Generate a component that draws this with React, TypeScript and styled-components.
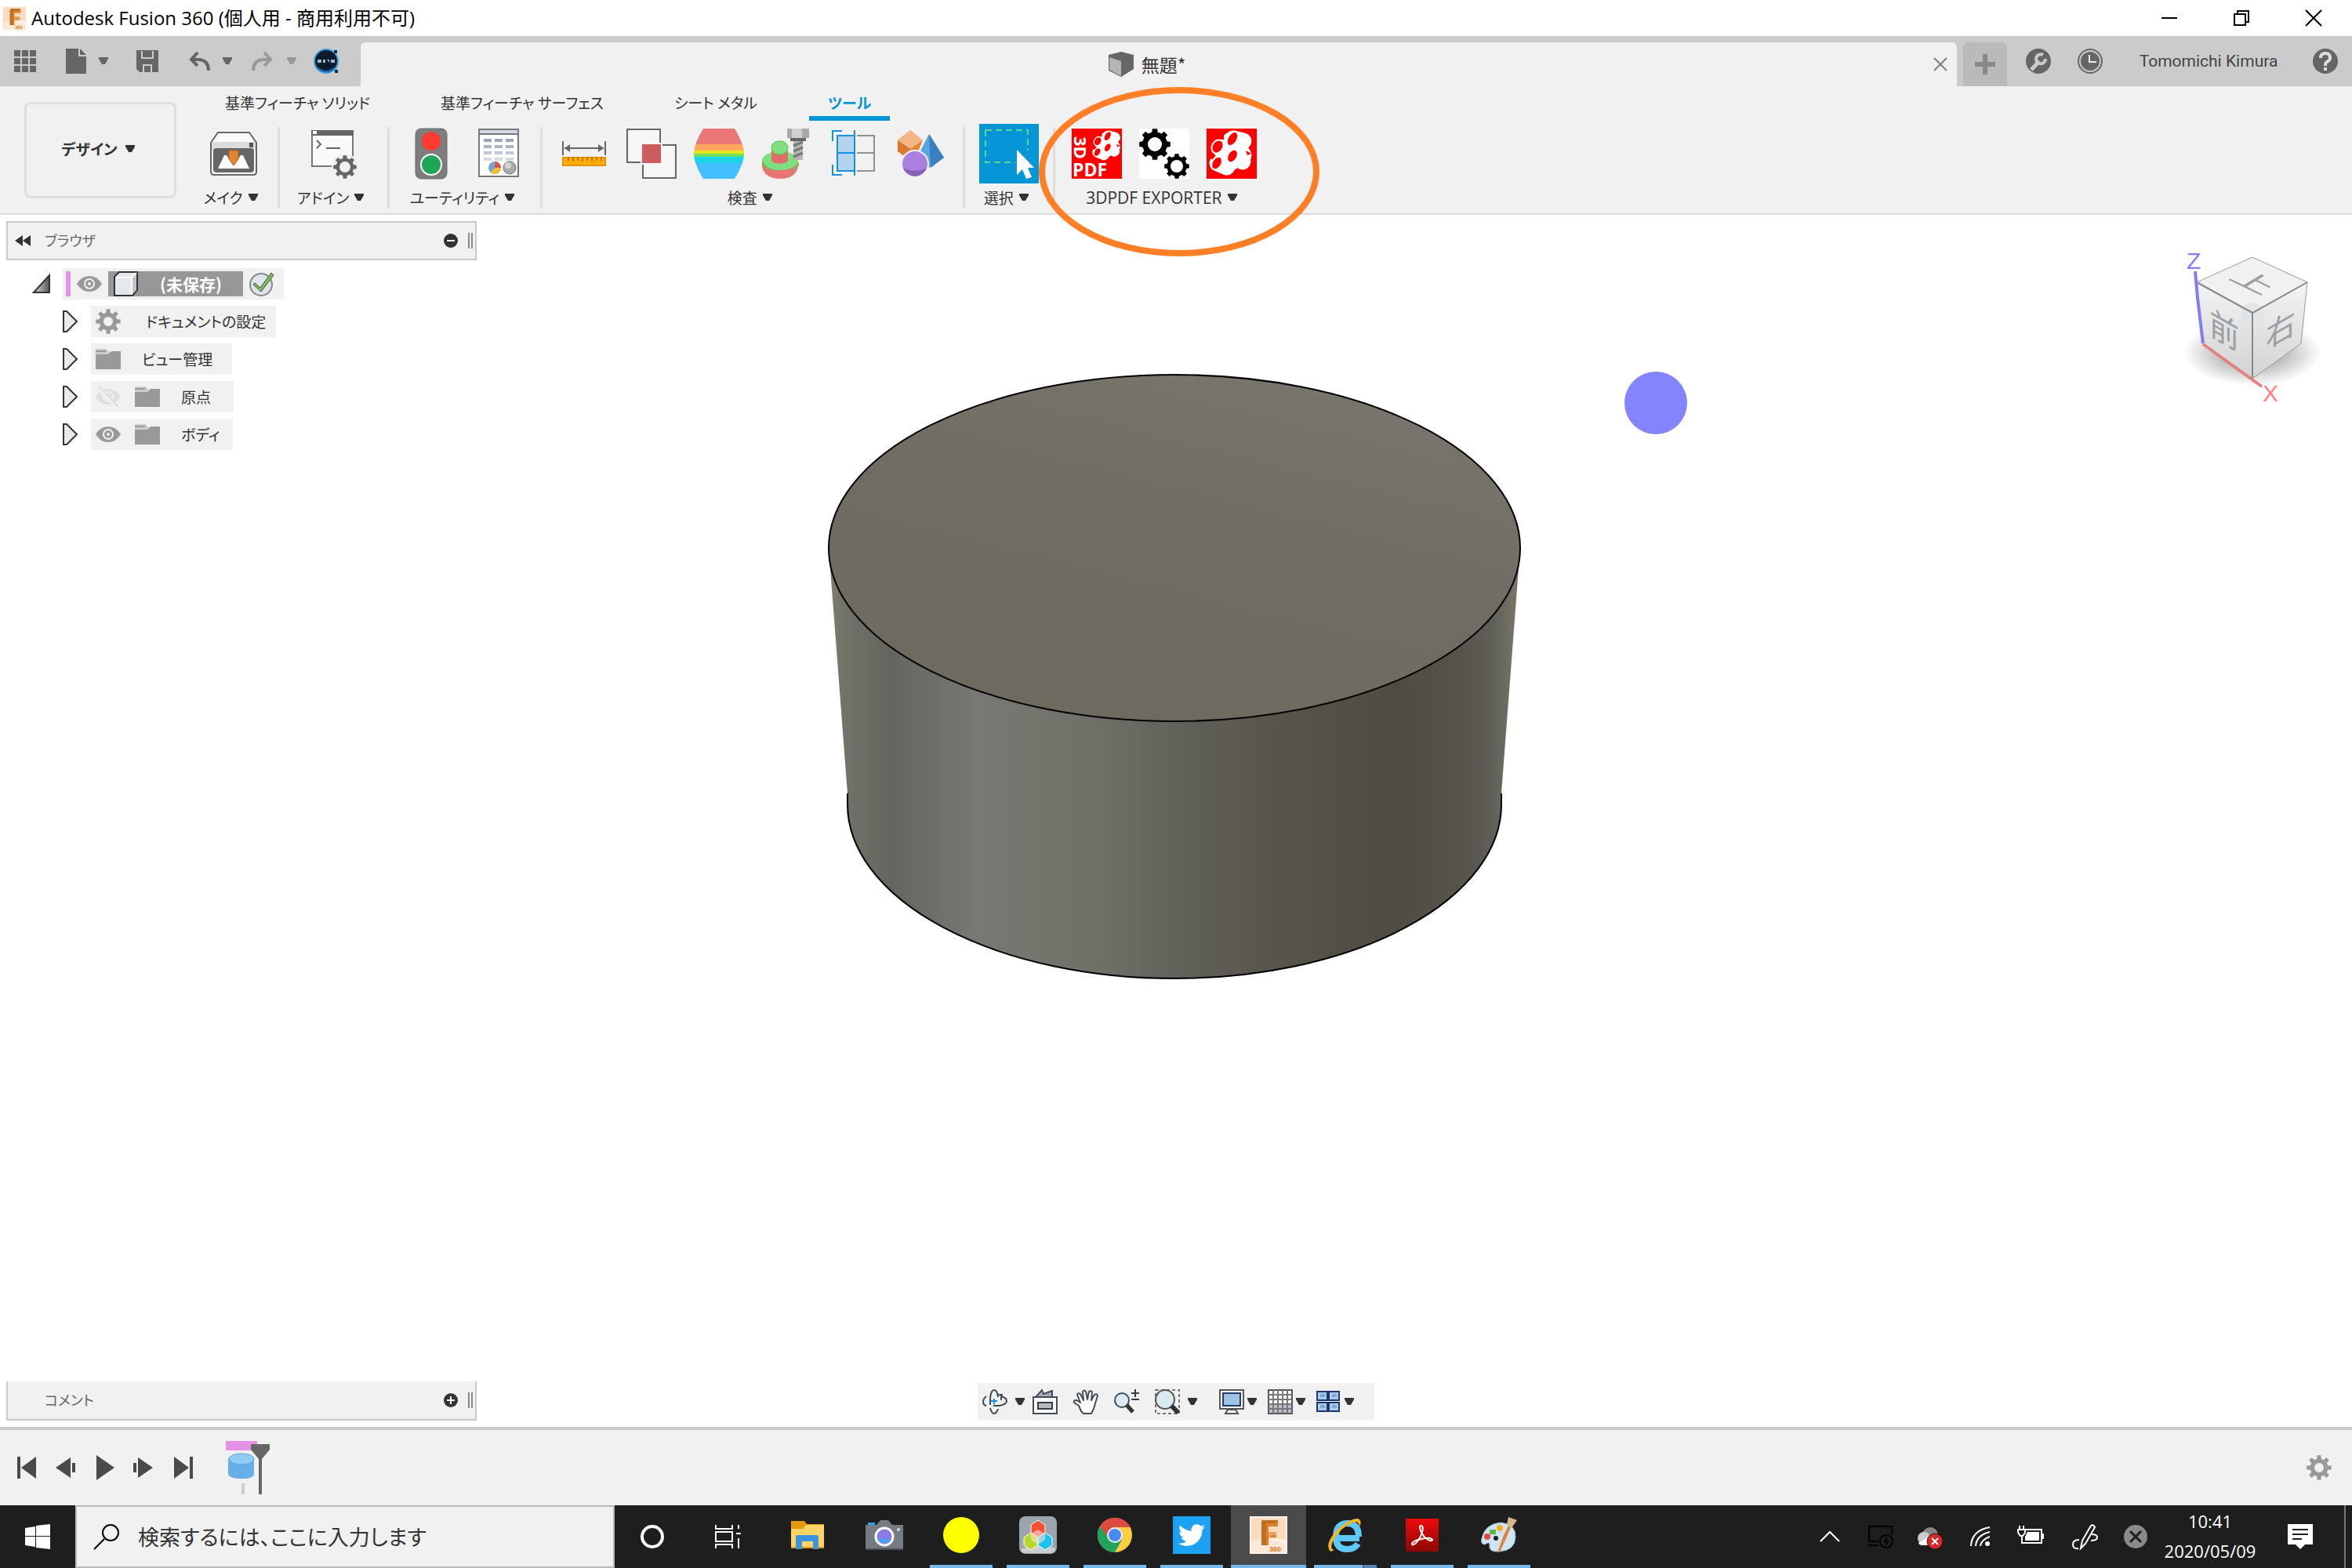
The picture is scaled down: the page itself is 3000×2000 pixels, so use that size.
import React from 'react';
import styled, { createGlobalStyle, css } from 'styled-components';
import { FaTwitter } from 'react-icons/fa';

const jp = `"Noto Sans CJK JP", sans-serif`;
const ui = `"Open Sans", "Noto Sans CJK JP", sans-serif`;

const Global = createGlobalStyle`
  * { box-sizing: border-box; }
  body { margin: 0; background: #fff; }
  button, input { font: inherit; color: inherit; border: 0; background: none; padding: 0; margin: 0; }
  svg { display: block; flex: none; overflow: visible; }
`;

const Page = styled.div`
  min-height: 100vh;
  display: flex;
  flex-direction: column;
  overflow: hidden;
  font-family: ${jp};
  font-size: 19px;
  line-height: 24px;
  color: #333;
  white-space: nowrap;
`;

const IconButton = styled.button<{ $w?: number }>`
  display: flex;
  align-items: center;
  justify-content: center;
  flex: none;
  ${p => p.$w && css`width: ${p.$w}px;`}
`;

/* ---------- window title ---------- */
const TitleBar = styled.header`
  display: flex;
  align-items: center;
  height: 46px;
  padding: 0 3px;
  gap: 6px;
`;
const Title = styled.h1`
  flex: 1;
  margin: 0;
  font: 400 24px/32px ${ui};
  color: #000;
`;
const WindowButtons = styled.div`
  display: flex;
  align-self: stretch;
`;

/* ---------- document tab bar ---------- */
const TabBar = styled.div`
  display: flex;
  height: 64px;
  background: #cbcbcb;
  color: #666;
`;
const QuickAccess = styled.div`
  display: flex;
  align-items: center;
  gap: 34px;
  width: 460px;
  padding-left: 16px;
`;
const Pair = styled.div<{ $gap: number }>`
  display: flex;
  align-items: center;
  gap: ${p => p.$gap}px;
`;
const DocTab = styled.div`
  flex: 1;
  display: flex;
  margin-top: 8px;
  border-radius: 6px 6px 0 0;
  background: #f1f1f1;
`;
const DocName = styled.div`
  flex: 1;
  display: flex;
  align-items: center;
  justify-content: center;
  gap: 10px;
  font-size: 23px;
  color: #333;
`;
const AddTab = styled.button`
  display: flex;
  align-items: center;
  justify-content: center;
  width: 56px;
  margin: 8px 8px 0;
  border-radius: 6px 6px 0 0;
  background: #bababa;
`;
const Account = styled.div`
  display: flex;
  align-items: center;
  padding-right: 2px;
`;
const UserName = styled.button`
  width: 234px;
  font: 400 21px/28px Roboto, sans-serif;
  color: #444;
`;

/* ---------- ribbon ---------- */
const Ribbon = styled.div`
  display: flex;
  gap: 17px;
  height: 164px;
  padding-left: 31px;
  background: #f1f1f1;
  border-bottom: 2px solid #dcdcdc;
`;
const Workspace = styled.button`
  display: flex;
  align-items: center;
  justify-content: center;
  gap: 10px;
  width: 194px;
  height: 123px;
  margin-top: 20px;
  padding: 0 6px 4px 0;
  border: 3px solid #dedede;
  border-radius: 8px;
  font-weight: 700;
  font-feature-settings: "palt";
`;
const RibbonBody = styled.div`
  display: flex;
  flex-direction: column;
`;
const Tabs = styled.nav`
  display: flex;
  gap: 42px;
  height: 44px;
  padding-left: 21px;
`;
const Tab = styled.button<{ $active?: boolean }>`
  padding: 4px 24px 0;
  font-feature-settings: "palt";
  border-bottom: 6px solid transparent;
  ${p => p.$active && css`
    font-weight: 700;
    color: #0696d7;
    border-color: #0696d7;
  `}
`;
const Groups = styled.div`
  display: flex;
`;
const Group = styled.section<{ $pad: number }>`
  position: relative;
  display: flex;
  flex-direction: column;
  padding: 4px ${p => p.$pad}px 0;
`;
const GroupIcons = styled.div`
  display: flex;
  justify-content: center;
  height: 76px;
`;
const GroupLabel = styled.button<{ $latin?: boolean }>`
  display: flex;
  align-items: center;
  justify-content: center;
  gap: 7px;
  height: 36px;
  padding-right: 8px;
  font-feature-settings: "palt";
  ${p => p.$latin && css`font: 400 21px/24px ${ui};`}
`;
const Divider = styled.div`
  width: 3px;
  height: 104px;
  margin-top: 8px;
  background: #dedede;
`;
const Marker = styled.svg`
  position: absolute;
  left: -22px;
  top: -44px;
  z-index: 2;
  pointer-events: none;
`;

/* ---------- modelling canvas ---------- */
const Canvas = styled.main`
  flex: 1;
  position: relative;
  display: flex;
  flex-direction: column;
  justify-content: space-between;
`;
const Scene = styled.svg`
  position: absolute;
  inset: 0;
  width: 100%;
  height: 100%;
`;
const CanvasRow = styled.div`
  position: relative;
  display: flex;
  justify-content: space-between;
  padding: 8px 32px 0 8px;
`;
const CubeHolder = styled.div`
  padding-top: 8px;
`;
const CanvasFooter = styled.div`
  position: relative;
  display: grid;
  grid-template-columns: 1fr auto 1fr;
  padding: 0 8px 8px;
`;
const PanelHead = styled.div<{ $open?: boolean }>`
  display: flex;
  align-items: center;
  width: 600px;
  height: 50px;
  padding: 0 3px 0 9px;
  border: 2px solid #c8c8c8;
  ${p => !p.$open && css`border-top: 0;`}
  background: #f1f1f1;
  color: #666;
`;
const PanelTitle = styled.h2<{ $indent: number }>`
  flex: 1;
  margin: 0;
  padding: 0 0 2px ${p => p.$indent}px;
  font-size: 18px;
  line-height: 24px;
  font-weight: 400;
  font-feature-settings: "palt";
`;
const Grip = styled.div`
  width: 6px;
  height: 20px;
  margin-left: 13px;
  border-left: 2px solid #888;
  border-right: 2px solid #888;
`;
const Tree = styled.ul`
  list-style: none;
  margin: 10px 0 0;
  padding: 0;
  display: flex;
  flex-direction: column;
  gap: 8px;
`;
const TreeRow = styled.li<{ $level: number }>`
  display: flex;
  align-items: center;
  height: 40px;
  padding-left: ${p => (p.$level ? 80 : 42) - 8}px;
  gap: 16px;
`;
const TreeItem = styled.div<{ $gap: number; $end: number }>`
  display: flex;
  align-items: center;
  height: 40px;
  padding: 0 ${p => p.$end}px 0 6px;
  gap: ${p => p.$gap}px;
  background: #f1f1f1;
  font-feature-settings: "palt";
`;
const Pink = styled.div`
  width: 6px;
  height: 32px;
  background: #e591e5;
`;
const RootItem = styled(TreeItem)`
  padding-left: 4px;
`;
const RootName = styled.button`
  display: flex;
  align-items: center;
  gap: 28px;
  width: 172px;
  height: 32px;
  padding-left: 6px;
  background: #979797;
  color: #fff;
  font-size: 21px;
  font-weight: 700;
`;
const Nested = styled.span`
  display: flex;
  gap: 18px;
`;
const NavBar = styled.div`
  display: flex;
  align-items: center;
  gap: 10px;
  width: 506px;
  height: 48px;
  margin-top: 2px;
  padding-left: 6px;
  background: #f1f1f1;
`;
const NavGroup = styled.div<{ $gap: number; $end: number }>`
  display: flex;
  align-items: center;
  gap: ${p => p.$gap}px;
  margin-right: ${p => p.$end}px;
`;

/* ---------- timeline ---------- */
const Timeline = styled.section`
  display: flex;
  align-items: center;
  height: 100px;
  padding: 0 26px 0 18px;
  border-top: 4px solid #c8c8c8;
  background: #f1f1f1;
`;
const Playback = styled.div`
  display: flex;
  gap: 18px;
  margin-right: 36px;
`;
const Spacer = styled.div`
  flex: 1;
`;

/* ---------- taskbar ---------- */
const Taskbar = styled.footer`
  display: flex;
  height: 80px;
  background: #1e1e1e;
  color: #fff;
`;
const Search = styled.label`
  display: flex;
  align-items: center;
  gap: 24px;
  width: 688px;
  padding-left: 22px;
  border: 2px solid #bababa;
  background: #f1f1f1;
  color: #222;
`;
const SearchInput = styled.input`
  flex: 1;
  font: 400 27px/36px ${jp};
  font-feature-settings: "palt";
  outline: 0;
  &::placeholder { color: #333; opacity: 1; }
`;
const Apps = styled.div`
  display: flex;
  gap: 2px;
  margin-left: 6px;
`;
const AppButton = styled.button<{ $state?: 'open' | 'active' | 'many' }>`
  display: flex;
  flex-direction: column;
  align-items: center;
  width: 96px;
  background: ${p => (p.$state === 'active' ? '#4b4b4b' : 'transparent')};
  &::after {
    content: "";
    width: ${p => (p.$state === 'active' ? 96 : 80)}px;
    height: 4px;
    background: ${p => !p.$state ? 'transparent' : p.$state === 'many'
      ? 'linear-gradient(90deg, #76b9ed 62px, #5a5f8a 62px, #5a5f8a 64px, #5386a8 64px)' : '#76b9ed'};
  }
  & > svg { margin: auto; }
`;
const TwitterTile = styled.span`
  display: flex;
  align-items: center;
  justify-content: center;
  width: 48px;
  height: 48px;
  margin: auto;
  background: #1da1f2;
`;
const Tray = styled.div`
  display: flex;
  margin-left: auto;
`;
const Clock = styled.time`
  display: flex;
  flex-direction: column;
  align-items: center;
  justify-content: center;
  gap: 2px;
  width: 134px;
  padding-bottom: 2px;
  font: 400 22px/36px ${ui};
`;
const ShowDesktop = styled.button`
  width: 10px;
  margin-left: 8px;
  border-left: 2px solid #77776f;
`;

/* ---------- drawings ---------- */
const Caret = ({ c = '#333' }: { c?: string }) => (
  <svg width="12" height="10" viewBox="0 0 12 10" fill={c}><path d="M0 0H12V2L8 9H4L0 2Z" /></svg>
);

const gearPath = (cx: number, cy: number, r: number, teeth: number, hole: number, depth = 0.24) => {
  const pts: string[] = [];
  const step = (Math.PI * 2) / teeth;
  for (let i = 0; i < teeth; i++) {
    const a = i * step - Math.PI / 2;
    [[-0.3, 1 - depth], [-0.2, 1], [0.2, 1], [0.3, 1 - depth]].forEach(([o, k]) => {
      pts.push(`${(cx + r * k * Math.cos(a + o * step)).toFixed(1)} ${(cy + r * k * Math.sin(a + o * step)).toFixed(1)}`);
    });
  }
  return `M${pts.join('L')}ZM${cx - hole} ${cy}a${hole} ${hole} 0 1 0 ${hole * 2} 0a${hole} ${hole} 0 1 0 ${-hole * 2} 0Z`;
};
const Gear = ({ c = '#999' }: { c?: string }) => (
  <svg width="32" height="32" fill={c} fillRule="evenodd"><path d={gearPath(16, 16, 16, 8, 6, 0.28)} /></svg>
);

const FusionLogo = ({ size }: { size: number }) => (
  <svg width={size} height={size} viewBox="0 0 48 48">
    <path fill="#fdf3ea" d="M0 0H48V48H0Z" />
    <path fill="#f9dcc0" d="M2 2H46V30Q20 26 2 32Z" />
    <path fill="#fbe8d6" d="M2 32Q24 26 46 36V46H2Z" />
    <path fill="#d9822e" d="M15 5H36V13H24V20H34V27H24V37H15Z" />
    <path fill="#b5651d" d="M15 8L18 5H36L33 9H21V37H15Z" opacity=".75" />
    <path fill="#e8a55f" d="M24 20H34V24H27L24 30Z" />
    <text x="25" y="45" fontFamily="Liberation Sans" fontWeight="700" fontSize="9" fill="#e07b22">360</text>
  </svg>
);

const Box64 = ({ children }: { children: React.ReactNode }) => (
  <IconButton type="button" $w={86}><svg width="64" height="64" viewBox="0 0 64 64">{children}</svg></IconButton>
);

const MakeIcon = () => (
  <Box64>
    <path d="M3 18L12 5H52L61 18V55Q61 59 57 59H7Q3 59 3 55Z" fill="#fafafa" stroke="#666" strokeWidth="2" />
    <path d="M4 17H60V28H4Z" fill="#dcdcdc" />
    <path d="M6 29Q6 25 10 25H54Q58 25 58 29V52Q58 56 54 56H10Q6 56 6 52Z" fill="#666" />
    <path d="M52 18h5v6h-5Z" fill="#555" />
    <path d="M12 51L20 34H23L31 46L32 47L41 34H44L52 51Z" fill="#fff" />
    <path d="M26 28H38V39L32 47L26 39Z" fill="#e3842e" stroke="#b5611a" />
  </Box64>
);
const AddinIcon = () => (
  <Box64>
    <path d="M4 3H56V37M38 48H4V3" fill="#fafafa" stroke="#777" strokeWidth="2" />
    <path d="M5 8H54V36L38 47H5Z" fill="#fafafa" />
    <path d="M3 2H57V9H3Z" fill="#666" /><path d="M5 3h5v4H5Z" fill="#fff" />
    <path d="M10 15L15 20L10 25M22 25H40" fill="none" stroke="#666" strokeWidth="2" />
    <circle cx="46" cy="49" r="17" fill="#f1f1f1" />
    <path d={gearPath(46, 49, 15, 8, 7)} fill="#666" fillRule="evenodd" />
  </Box64>
);
const TrafficIcon = () => (
  <Box64>
    <rect x="12" width="40" height="64" rx="7" fill="#7d7d7d" stroke="#6b6b6b" />
    <circle cx="32" cy="16" r="12" fill="#ff3b30" />
    <circle cx="32" cy="46" r="13" fill="#1fa654" stroke="#fff" strokeWidth="2" />
  </Box64>
);
const ReportIcon = () => (
  <Box64>
    <path d="M7 1H57V61H7Z" fill="#fff" stroke="#777" strokeWidth="2" />
    <path d="M8 2H56V6H8Z" fill="#d5d8e6" /><path d="M7 6H57V8H7Z" fill="#777" />
    {[13, 21, 29, 37].map((y, i) => [13, 27, 41].map(x => (
      <path key={`${x}-${y}`} d={`M${x} ${y}h10v4h-10Z`} fill={['#9aa7b8', '#a9b5cb', '#c0c7da', '#d6d8e4'][i]} />
    )))}
    <circle cx="27" cy="50" r="8" fill="#6fa8d8" />
    <path d="M27 50V42A8 8 0 0 1 35 50Z" fill="#d9534f" /><path d="M27 50H35A8 8 0 0 1 22 56Z" fill="#f0c030" />
    <circle cx="46" cy="50" r="8" fill="#aaa" stroke="#777" /><circle cx="44" cy="47" r="4" fill="#d5d5d5" />
  </Box64>
);
const MeasureIcon = () => (
  <Box64>
    <path d="M5 16V34M59 16V34M7 25H57" stroke="#666" strokeWidth="2" />
    <path d="M7 25L14 20V30ZM57 25L50 20V30Z" fill="#666" />
    <path d="M5 37H59V47H5Z" fill="#ffab0a" stroke="#e69500" strokeWidth="2" />
    <path d="M12 36V41M18 36V42M24 36V41M30 36V42M36 36V41M42 36V42M48 36V41M54 36V42" stroke="#7a5a10" />
  </Box64>
);
const InterferenceIcon = () => (
  <Box64>
    <path d="M18 43H1V1H43V18M46 21H63V63H21V46" fill="none" stroke="#666" strokeWidth="2" />
    <path d="M2 2H42V42H2ZM22 22H62V62H22Z" fill="#f6f6f6" />
    <path d="M20 20H44V44H20Z" fill="#cd5c5c" />
  </Box64>
);
const ZebraIcon = () => (
  <Box64>
    <clipPath id="barrel"><path d="M12 0H52Q64 20 64 32T52 64H12Q0 44 0 32T12 0Z" /></clipPath>
    <g clipPath="url(#barrel)">
      {[[0, 20, '#ec7777'], [20, 8, '#ffa75f'], [28, 4, '#e6e619'], [32, 4, '#6fdf5f'], [36, 8, '#19d5e6'], [44, 20, '#42bfff']].map(
        ([y, h, c]) => <rect key={y} y={y} width="64" height={h} fill={c as string} />)}
    </g>
  </Box64>
);
const ScrewIcon = () => (
  <Box64>
    <path d="M1 40V48Q4 64 24 64T47 48V40Z" fill="#e87474" />
    <ellipse cx="24" cy="41" rx="23" ry="12" fill="#7fe07f" />
    <path d="M1 40Q2 54 24 54T48 42V47Q44 53 36 53Q10 58 1 40Z" fill="#5fc75f" />
    <path d="M13 26H34V42Q24 48 13 42Z" fill="#e06c6c" />
    <rect x="13" y="16" width="21" height="17" rx="9" fill="#7fe07f" stroke="#55c055" />
    <path d="M33 0H61V12H33Z" fill="#a8a8a8" /><path d="M39 0H52V12H39Z" fill="#d0d0d0" />
    <path d="M37 12H57V16H37Z" fill="#666" />
    <path d="M41 16H53V40H41Z" fill="#b5b5b5" />
    <path d="M41 22L53 17M41 29L53 24M41 36L53 31" stroke="#777" strokeWidth="3" />
  </Box64>
);
const SectionIcon = () => (
  <Box64>
    <path d="M5 16V3H17M5 46V59H17M33 2V60" fill="none" stroke="#1490e8" strokeWidth="2" />
    <path d="M11 9H33V54H11ZM11 31H33" fill="#b3d4ec" stroke="#1490e8" strokeWidth="2" />
    <path d="M36 9H58V54H36M36 31H58" fill="none" stroke="#909090" strokeWidth="2" />
  </Box64>
);
const ShapesIcon = () => (
  <Box64>
    <path d="M2 15L18 2L34 15L26 34L8 34L2 29Z" fill="#e8853a" /><path d="M2 15L18 2L34 15L18 26Z" fill="#f6b587" />
    <path d="M2 15L18 26L12 34L2 29Z" fill="#d97a30" />
    <path d="M42 7L61 37L42 50L28 34Z" fill="#5aa5e0" /><path d="M42 7L61 37L44 50Z" fill="#3a7fc0" />
    <circle cx="24" cy="45" r="17" fill="#a97fe0" stroke="#f1f1f1" strokeWidth="2" />
    <path d="M9 50A16 16 0 0 0 39 50Q24 58 9 50Z" fill="#8462b8" />
  </Box64>
);
const SelectIcon = () => (
  <IconButton type="button" $w={76}>
    <svg width="76" height="76">
      <path fill="#0696d7" d="M0 0H76V76H0Z" />
      <path d="M8 8H62V49H8Z" fill="none" stroke="#5fd68a" strokeWidth="2" strokeDasharray="8 5" />
      <path fill="#0696d7" d="M46 34H76V62H46Z" />
      <path d="M48 33V65L55 58L60 70L67 68L62 56H70Z" fill="#fff" />
    </svg>
  </IconButton>
);
const Cluster = () => (
  <>
    <path d="M34 13L47 16M34 34L46 42M14 44L26 49M34 13L47 34L26 46L18 24Z" fill="#fff" stroke="#fff" strokeWidth="21" strokeLinecap="round" strokeLinejoin="round" />
    <path d="M50 28L57 32L52 34Z" fill="#f00" />
    <path d="M22 8L26 3L18 2L4 14L6 22Q10 13 22 14ZM4 32L12 34L7 40Z" fill="#f00" />
    {[[33, 13, 6, 10], [14, 23, 7, 9], [33, 35, 6, 9], [13, 44, 6, 9]].map(([x, y, rx, ry]) => (
      <ellipse key={y} cx={x} cy={y} rx={rx} ry={ry} fill="#f00" stroke="#fff" strokeWidth="2" transform={`rotate(30 ${x} ${y})`} />
    ))}
  </>
);
const PdfIcon = () => (
  <Box64>
    <path fill="#f00" d="M0 0H64V64H0Z" />
    <g transform="translate(24 1) scale(.66)"><Cluster /></g>
    <g fill="#fff" fontFamily="Open Sans" fontWeight="700">
      <text transform="translate(3 10) rotate(90)" fontSize="22">3D</text>
      <text x="1" y="61" fontSize="23">PDF</text>
    </g>
  </Box64>
);
const GearsIcon = () => (
  <Box64>
    <path fill="#fff" d="M0 0H64V64H0Z" />
    <g fillRule="evenodd"><path d={gearPath(20, 20, 20, 8, 9, 0.2)} /><path d={gearPath(48, 48, 16, 8, 8, 0.2)} /></g>
  </Box64>
);
const ClusterIcon = () => (<Box64><path fill="#f00" d="M0 0H64V64H0Z" /><Cluster /></Box64>);

const Eye = ({ off }: { off?: boolean }) => (
  <svg width="32" height="32" viewBox="0 0 32 32">
    <path d="M0 16Q6 6 16 6T32 16Q26 26 16 26T0 16Z" fill={off ? '#dedede' : '#999'} />
    <circle cx="16" cy="16" r="6" fill="none" stroke="#f1f1f1" strokeWidth="2" />
    {!off && <circle cx="16" cy="16" r="2" fill="#f1f1f1" />}
    {off && <><path d="M2 3L28 30" stroke="#f1f1f1" strokeWidth="6" /><path d="M4 3L29 29" stroke="#dedede" strokeWidth="2" /></>}
  </svg>
);
const Folder = () => (
  <svg width="32" height="32"><path fill="#ccc" d="M0 3H14L17 7H32V10H0Z" /><path fill="#999" d="M0 5H13V7H0ZM0 10H16L20 6H32V29H0Z" /></svg>
);
const Expander = () => (
  <svg width="20" height="28"><path d="M1 1H5L18 14L5 27H1Z" fill="#e9e9e9" stroke="#333" strokeWidth="2" /></svg>
);
const RoundSign = ({ plus }: { plus?: boolean }) => (
  <svg width="18" height="18"><circle cx="9" cy="9" r="9" fill="#333" /><path d={plus ? 'M4 9H14M9 4V14' : 'M4 9H14'} stroke="#fff" strokeWidth="2" /></svg>
);
const Glyph = ({ d, w = 32, sw = 2, c = 'currentColor', f = 'none' }: { d: string; w?: number; sw?: number; c?: string; f?: string }) => (
  <svg width={w} height="32" viewBox={`0 0 ${w} 32`} fill={f} stroke={sw ? c : 'none'} strokeWidth={sw}><path d={d} /></svg>
);

const ViewCube = () => (
  <svg width="190" height="236" viewBox="0 0 190 236">
    <defs>
      <radialGradient id="cubeShadow"><stop offset=".4" stopColor="#888" stopOpacity=".6" /><stop offset="1" stopColor="#888" stopOpacity="0" /></radialGradient>
      <linearGradient id="face" x2="0" y2="1"><stop stopColor="#f4f4f4" /><stop offset="1" stopColor="#d2d2d2" /></linearGradient>
    </defs>
    <ellipse cx="95" cy="160" rx="88" ry="42" fill="url(#cubeShadow)" />
    <path d="M95 38L165 70L95 109L24 70Z" fill="#f1f1f1" />
    <path d="M24 70L95 109V193L32 148Z" fill="url(#face)" />
    <path d="M165 70L95 109V193L157 148Z" fill="url(#face)" />
    <path d="M95 95L109 101V118L95 126L81 118V101Z" fill="#dfe3e6" opacity=".8" />
    <path d="M24 70L95 38L165 70L157 148L95 193" fill="none" stroke="#999" />
    <path d="M24 70L95 109L165 70M95 109V193" fill="none" stroke="#888" strokeWidth="2" />
    <path d="M22 56L25 90L32 148" fill="none" stroke="#7f7ff5" strokeWidth="4" />
    <path d="M32 149L107 203" stroke="#e58080" strokeWidth="4" />
    <g fill="#999fa3" fontFamily="Noto Sans CJK JP" fontSize="40">
      <text transform="matrix(.95 .55 0 1.08 40 136)">前</text>
      <text transform="matrix(.95 -.55 0 1 112 156)">右</text>
      <text transform="matrix(1.15 .56 -.72 .44 63 65)">上</text>
    </g>
    <g fontFamily="Liberation Sans" fontSize="30">
      <text x="11" y="53" fill="#8080ff">Z</text>
      <text x="108" y="222" fill="#ff8080">X</text>
    </g>
  </svg>
);

const tree = [
  { name: 'ドキュメントの設定', icons: <Gear />, gap: 32, end: 13 },
  { name: 'ビュー管理', icons: <Folder />, gap: 27, end: 25 },
  { name: '原点', icons: <Nested><Eye off /><Folder /></Nested>, gap: 27, end: 29 },
  { name: 'ボディ', icons: <Nested><Eye /><Folder /></Nested>, gap: 27, end: 17 },
];

const playback = [
  ['最初へ', 'M4 2H8V30H4ZM28 2V30L9 16Z'],
  ['前へ', 'M22 3V29L3 16ZM24 10H28V22H24Z'],
  ['再生', 'M5 0L28 16L5 32Z'],
  ['次へ', 'M2 10H6V22H2ZM8 3V29L27 16Z'],
  ['最後へ', 'M4 2V30L23 16ZM24 2H28V30H24Z'],
];

export default function App() {
  return (
    <Page>
      <Global />
      <TitleBar>
        <FusionLogo size={31} />
        <Title>Autodesk Fusion 360 (個人用 - 商用利用不可)</Title>
        <WindowButtons>
          <IconButton $w={92} aria-label="最小化"><Glyph c="#000" d="M6 16H26" /></IconButton>
          <IconButton $w={92} aria-label="元に戻す"><Glyph c="#000" d="M7 11H21V25H7ZM11 10V7H25V21H22" /></IconButton>
          <IconButton $w={92} aria-label="閉じる"><Glyph c="#000" d="M6 6L26 26M26 6L6 26" /></IconButton>
        </WindowButtons>
      </TitleBar>

      <TabBar>
        <QuickAccess>
          <IconButton aria-label="データパネル"><Glyph sw={0} f="#666" d="M2 2h8v8H2ZM12 2h8v8h-8ZM22 2h8v8h-8ZM2 12h8v8H2ZM12 12h8v8h-8ZM22 12h8v8h-8ZM2 22h8v8H2ZM12 22h8v8h-8ZM22 22h8v8h-8Z" /></IconButton>
          <Pair $gap={12}>
            <IconButton aria-label="ファイル"><Glyph sw={0} f="#666" d="M2 0H18V10H28V32H2ZM20 0L28 8H20Z" /></IconButton>
            <Caret c="#666" />
          </Pair>
          <IconButton aria-label="保存">
            <Glyph sw={0} f="#666" d="M2 2H30V30H6L2 26ZM8 3V13H24V3H22V11H10V3ZM10 30H12V22H20V30H22V20H10ZM14 24H17V29H14Z" />
          </IconButton>
          <Pair $gap={22}>
            <Pair $gap={14}>
              <IconButton aria-label="元に戻す"><Glyph sw={4} d="M14 5L6 14L14 22M7 14H16Q28 15 28 28" /></IconButton>
              <Caret c="#666" />
            </Pair>
            <Pair $gap={16}>
              <IconButton aria-label="やり直し"><Glyph sw={4} c="#999" d="M19 5L27 14L19 22M26 14H17Q5 15 5 28" /></IconButton>
              <Caret c="#999" />
            </Pair>
            <IconButton aria-label="アドイン">
              <svg width="32" height="32">
                <circle cx="16" cy="16" r="15" fill="#0c1c2a" stroke="#3aa0e0" strokeWidth="2" />
                <path d="M4 22Q16 34 28 22Q24 30 16 30T4 22Z" fill="#1d6fc0" />
                <path d="M5 14H10V18H5ZM12 14H15V18H12ZM17 14L20 18V14M22 14H27V18H22Z" fill="#9fb9c8" />
                <path d="M26 2h4v4h-4ZM27 27h4v4h-4Z" fill="#0a2a50" />
              </svg>
            </IconButton>
          </Pair>
        </QuickAccess>
        <DocTab>
          <DocName>
            <svg width="32" height="32">
              <path d="M0 4L16 0L32 4V22L16 32L0 24Z" fill="#666" /><path d="M1 7L16 12V31L1 23Z" fill="#b3b5b4" />
            </svg>
            無題*
          </DocName>
          <IconButton $w={30} aria-label="タブを閉じる"><Glyph w={30} c="#808080" d="M1 8L17 24M17 8L1 24" /></IconButton>
        </DocTab>
        <AddTab aria-label="新規"><Glyph sw={6} c="#888" d="M3 16H29M16 3V29" /></AddTab>
        <Account>
          <IconButton $w={64} aria-label="拡張機能">
            <svg width="32" height="32">
              <circle cx="16" cy="16" r="16" fill="#666" />
              <path d="M7 27L17 16" stroke="#cbcbcb" strokeWidth="5" />
              <path d="M22 8A6 6 0 1 0 25 13" fill="none" stroke="#cbcbcb" strokeWidth="4" />
            </svg>
          </IconButton>
          <IconButton $w={68} aria-label="ジョブの状態">
            <svg width="32" height="32">
              <circle cx="16" cy="16" r="15" fill="#ccc" stroke="#666" strokeWidth="2" /><circle cx="16" cy="16" r="12" fill="#666" />
              <path d="M15 8V17H24" fill="none" stroke="#eee" strokeWidth="2" />
            </svg>
          </IconButton>
          <UserName>Tomomichi Kimura</UserName>
          <IconButton $w={64} aria-label="ヘルプ">
            <svg width="32" height="32">
              <circle cx="16" cy="16" r="16" fill="#666" />
              <path d="M10 12Q10 6 16 6T22 12Q22 15 18 17Q16 18 16 22" fill="none" stroke="#ddd" strokeWidth="4" /><path d="M14 24h4v4h-4Z" fill="#ddd" />
            </svg>
          </IconButton>
        </Account>
      </TabBar>

      <Ribbon>
        <Workspace>デザイン<Caret /></Workspace>
        <RibbonBody>
          <Tabs>
            <Tab>基準フィーチャ ソリッド</Tab>
            <Tab>基準フィーチャ サーフェス</Tab>
            <Tab>シート メタル</Tab>
            <Tab $active>ツール</Tab>
          </Tabs>
          <Groups>
            <Group $pad={13}><GroupIcons><MakeIcon /></GroupIcons><GroupLabel>メイク<Caret /></GroupLabel></Group>
            <Divider />
            <Group $pad={22}><GroupIcons><AddinIcon /></GroupIcons><GroupLabel>アドイン<Caret /></GroupLabel></Group>
            <Divider />
            <Group $pad={10}>
              <GroupIcons><TrafficIcon /><ReportIcon /></GroupIcons>
              <GroupLabel>ユーティリティ<Caret /></GroupLabel>
            </Group>
            <Divider />
            <Group $pad={10}>
              <GroupIcons>
                <MeasureIcon /><InterferenceIcon /><ZebraIcon /><ScrewIcon /><SectionIcon /><ShapesIcon />
              </GroupIcons>
              <GroupLabel>検査<Caret /></GroupLabel>
            </Group>
            <Divider />
            <Group $pad={18}><GroupIcons><SelectIcon /></GroupIcons><GroupLabel>選択<Caret /></GroupLabel></Group>
            <Divider />
            <Group $pad={10}>
              <GroupIcons><PdfIcon /><GearsIcon /><ClusterIcon /></GroupIcons>
              <GroupLabel $latin>3DPDF EXPORTER<Caret /></GroupLabel>
              <Marker width="360" height="218">
                <ellipse cx="180" cy="109" rx="175" ry="104" fill="none" stroke="#ff7f27" strokeWidth="8" />
              </Marker>
            </Group>
          </Groups>
        </RibbonBody>
      </Ribbon>

      <Canvas>
        <Scene viewBox="0 0 3000 1546">
          <defs>
            <linearGradient id="side">
              <stop stopColor="#807b6e" /><stop offset=".03" stopColor="#6f7067" /><stop offset=".09" stopColor="#65655f" />
              <stop offset=".22" stopColor="#777972" /><stop offset=".38" stopColor="#6f7169" /><stop offset=".5" stopColor="#62625b" />
              <stop offset=".62" stopColor="#59564d" /><stop offset=".82" stopColor="#4f4b42" /><stop offset=".92" stopColor="#57544b" />
              <stop offset=".96" stopColor="#5f5f58" /><stop offset="1" stopColor="#7d786b" />
            </linearGradient>
            <linearGradient id="lid" x1=".3" y1="1" x2=".8" y2="0">
              <stop stopColor="#6f6a5f" /><stop offset=".5" stopColor="#716c63" /><stop offset="1" stopColor="#79766d" />
            </linearGradient>
          </defs>
          <path d="M1057 425L1081 738Q1081 744 1081 752A417 222 0 0 0 1915 752V738L1939 425Z" fill="url(#side)" />
          <path d="M1081 738V752A417 222 0 0 0 1915 752V738" fill="none" stroke="#000" strokeWidth="2" />
          <ellipse cx="1498" cy="425" rx="441" ry="221" fill="url(#lid)" stroke="#000" strokeWidth="2" />
          <circle cx="2112" cy="240" r="40" fill="#8484ff" />
        </Scene>
        <CanvasRow>
          <div>
            <PanelHead $open>
              <svg width="20" height="14" fill="#333"><path d="M0 7L10 0V14ZM10 7L20 0V14Z" /></svg>
              <PanelTitle $indent={18}>ブラウザ</PanelTitle>
              <IconButton aria-label="折りたたむ"><RoundSign /></IconButton>
              <Grip />
            </PanelHead>
            <Tree>
              <TreeRow $level={0}>
                <svg width="22" height="24">
                  <defs><linearGradient id="tri"><stop stopColor="#ddd" /><stop offset="1" stopColor="#555" /></linearGradient></defs>
                  <path d="M1 23L21 1V23Z" fill="url(#tri)" stroke="#333" strokeWidth="2" />
                </svg>
                <RootItem $gap={8} $end={12}>
                  <Pink />
                  <Eye />
                  <RootName>
                    <svg width="32" height="32">
                      <path d="M2 7L8 1H31V24L25 31H2Z" fill="#e4e7ec" stroke="#333" strokeWidth="2" />
                      <path d="M3 8H24V30M24 8L30 2" fill="none" stroke="#fff" strokeWidth="2" />
                      <path d="M25 9L30 3V24L25 29Z" fill="#bfc3ca" />
                    </svg>
                    (未保存)
                  </RootName>
                  <svg width="32" height="32">
                    <circle cx="15" cy="17" r="14" fill="#dfe3ec" stroke="#888" strokeWidth="2" />
                    <path d="M7 15L14 21L28 2L31 5L15 26L5 17Z" fill="#7cc256" stroke="#3c4a3a" />
                  </svg>
                </RootItem>
              </TreeRow>
              {tree.map(t => (
                <TreeRow $level={1} key={t.name}>
                  <Expander />
                  <TreeItem $gap={t.gap} $end={t.end}>{t.icons}{t.name}</TreeItem>
                </TreeRow>
              ))}
            </Tree>
          </div>
          <CubeHolder><ViewCube /></CubeHolder>
        </CanvasRow>
        <CanvasFooter>
          <PanelHead>
            <PanelTitle $indent={38}>コメント</PanelTitle>
            <IconButton aria-label="コメントを追加"><RoundSign plus /></IconButton>
            <Grip />
          </PanelHead>
          <NavBar>
            <NavGroup $gap={10} $end={0}>
              <svg width="32" height="32" fill="none" stroke="#444c58" strokeWidth="2">
                <path d="M10 20V12Q11 1 15 1T20 10M10 24Q12 31 15 31T20 25M5 9Q1 12 1 16T5 21M14 21H22Q31 19 31 15T24 9" />
                <path d="M24 8V14M20 7H26" /><path d="M15 12V19M11 15H19" stroke="#1490e8" />
              </svg>
              <Caret />
            </NavGroup>
            <NavGroup $gap={20} $end={0}>
              <svg width="32" height="32">
                <path d="M4 10L12 1L14 6L25 2V10" fill="#aab" stroke="#444c58" strokeWidth="2" />
                <path d="M1 10H31V31H1Z" fill="#fff" stroke="#444c58" strokeWidth="2" /><path d="M7 17H25V25H7Z" fill="#bbb" stroke="#333c4c" strokeWidth="2" />
              </svg>
              <svg width="32" height="32" fill="#fff" stroke="#444c58" strokeWidth="2" strokeLinejoin="round">
                <path d="M10 28L7 21L1 17Q0 14 4 14L9 17L5 7Q6 4 9 6L13 14L12 3Q14 0 16 3L18 13L20 3Q23 1 24 4L23 14L27 7Q30 5 31 8L28 18L26 25L23 31H13Z" />
              </svg>
              <svg width="32" height="32">
                <circle cx="10" cy="14" r="9" fill="#d8ebf5" stroke="#444c58" strokeWidth="2" /><path d="M16 20L24 29" stroke="#333" strokeWidth="5" />
                <path d="M22 5H32M27 0V10M22 13H32" stroke="#333c4c" strokeWidth="2" />
              </svg>
              <svg width="32" height="32">
                <path d="M1 1H31V31H1Z" fill="none" stroke="#777" strokeWidth="2" strokeDasharray="4 3" />
                <circle cx="13" cy="13" r="12" fill="#d8ebee" stroke="#555" strokeWidth="2" /><path d="M21 21L30 30" stroke="#333" strokeWidth="6" />
              </svg>
            </NavGroup>
            <NavGroup $gap={10} $end={18}><Caret /></NavGroup>
            <NavGroup $gap={4} $end={4}>
              <svg width="32" height="32">
                <path d="M1 1H31V25H1Z" fill="#fff" stroke="#555" strokeWidth="2" /><path d="M5 5H27V21H5Z" fill="#9cc4e4" stroke="#223a70" strokeWidth="2" />
                <path d="M11 26H21L24 31H8Z" fill="#fff" stroke="#555" strokeWidth="2" />
              </svg>
              <Caret />
            </NavGroup>
            <NavGroup $gap={4} $end={4}>
              <svg width="32" height="32">
                <path d="M1 1H31V31H1Z" fill="#fff" stroke="#555" strokeWidth="2" /><path d="M2 18H30V30H2Z" fill="#bcc0cc" />
                <path d="M7 1V31M13 1V31M19 1V31M25 1V31M1 7H31M1 13H31M1 19H31M1 25H31" stroke="#777" strokeWidth="2" />
              </svg>
              <Caret />
            </NavGroup>
            <NavGroup $gap={6} $end={0}>
              <svg width="30" height="28">
                <path d="M1 1H14V12H1ZM16 1H29V12H16ZM1 15H14V26H1ZM16 15H29V26H16Z" fill="#a9cdea" stroke="#1f3570" strokeWidth="2" />
                <path d="M5 4h6v4H5ZM20 4h6v4h-6ZM5 18h6v4H5ZM20 18h6v4h-6Z" fill="#7fa9cc" />
              </svg>
              <Caret />
            </NavGroup>
          </NavBar>
        </CanvasFooter>
      </Canvas>

      <Timeline>
        <Playback>
          {playback.map(([label, d]) => (
            <IconButton key={label} aria-label={label}><Glyph sw={0} f="#4a4a4a" d={d} /></IconButton>
          ))}
        </Playback>
        <svg width="60" height="70" viewBox="0 0 60 70">
          <path d="M2 1H42V13H2Z" fill="#e591e5" />
          <path d="M5 23V43Q6 49 22 49T38 43V23Z" fill="#68aee8" /><ellipse cx="22" cy="24" rx="16" ry="7" fill="#8fcdf7" stroke="#5a9fd6" />
          <path d="M22 55H26V69H22Z" fill="#ccc" />
          <path d="M34 5H58V12L48 24V69H44V24L34 12Z" fill="#666" />
        </svg>
        <Spacer />
        <IconButton aria-label="設定"><Gear /></IconButton>
      </Timeline>

      <Taskbar>
        <IconButton $w={96} aria-label="スタート"><Glyph sw={0} f="#fff" d="M0 5L13 3V15H0ZM14 2L32 0V15H14ZM0 16H13V29L0 27ZM14 16H32V32L14 30Z" /></IconButton>
        <Search>
          <Glyph c="#000" d="M0 32L13 19M11 11A10 10 0 1 1 31 11A10 10 0 1 1 11 11" />
          <SearchInput type="search" aria-label="検索" placeholder="検索するには、ここに入力します" />
        </Search>
        <IconButton $w={96} aria-label="Cortana"><svg width="32" height="32"><circle cx="16" cy="16" r="13" fill="none" stroke="#fff" strokeWidth="4" /></svg></IconButton>
        <IconButton $w={96} aria-label="タスク ビュー"><Glyph c="#fff" d="M1 1V6H22V1M1 10H22V22H1ZM1 31V26H22V31M30 1V6M30 18V31M27 12h6" /></IconButton>
        <Apps>
          <AppButton aria-label="エクスプローラー">
            <svg width="42" height="36"><path d="M0 0H17L20 4H42V35H0Z" fill="#e59b0b" /><path d="M0 10H15L19 5H42V33H0Z" fill="#ffd466" /><path d="M6 36V20Q6 18 8 18H33Q35 18 35 20V36H28V26H14V36Z" fill="#3b94dd" /></svg>
          </AppButton>
          <AppButton aria-label="カメラ">
            <svg width="48" height="38"><path d="M3 3H12V8H3Z" fill="#2aa3ee" /><path d="M0 6H14L19 0H29L34 6H48V38H0Z" fill="#757c84" /><path d="M0 36H48V38H0Z" fill="#4b5056" />
              <circle cx="24" cy="21" r="11" fill="#8a7be8" stroke="#fff" strokeWidth="3" /><path d="M15 24A10 10 0 0 0 33 24Z" fill="#4aa3ee" /><circle cx="42" cy="12" r="2" fill="#c5dbe5" /></svg>
          </AppButton>
          <AppButton $state="open" aria-label="ペン"><svg width="46" height="46"><circle cx="23" cy="23" r="23" fill="#ff0" /></svg></AppButton>
          <AppButton $state="open" aria-label="カラー">
            <svg width="48" height="48"><rect width="48" height="48" rx="8" fill="#9aa5ad" /><path d="M2 42L20 36L46 40Q46 47 40 47H8Q3 47 2 42Z" fill="#c9cdd0" />
              <g stroke="#fff" strokeWidth="1"><path d="M24 5L33 11V22L24 28L15 22V11Z" fill="#f2502f" /><path d="M15 21L24 27V37L15 43L6 37V27Z" fill="#b9d92a" /><path d="M33 21L42 27V37L33 43L24 37V27Z" fill="#1cc3ee" /></g>
              <path d="M24 17L33 22V30L24 36L15 30V22Z" fill="#f6e3e3" opacity=".6" /></svg>
          </AppButton>
          <AppButton $state="open" aria-label="Chrome">
            <svg width="46" height="46"><circle cx="23" cy="23" r="22" fill="#ffcd40" /><path d="M23 23L4 12A22 22 0 0 0 23 45L32 29Z" fill="#1ea45c" /><path d="M4 12A22 22 0 0 1 43 13H23V23H12Z" fill="#dd4b3e" />
              <circle cx="23" cy="23" r="10" fill="#f1f1f1" /><circle cx="23" cy="23" r="8" fill="#4a8af4" /></svg>
          </AppButton>
          <AppButton $state="open" aria-label="Twitter"><TwitterTile><FaTwitter size={34} /></TwitterTile></AppButton>
          <AppButton $state="active" aria-label="Fusion 360"><FusionLogo size={48} /></AppButton>
          <AppButton $state="many" aria-label="Internet Explorer">
            <svg width="48" height="48"><path d="M13 28H42M40 35Q36 42 26 42Q12 42 12 26T26 9Q41 9 41 26" fill="none" stroke="#5fc9f5" strokeWidth="8" />
              <path d="M5 45Q-3 36 12 19Q28 3 40 3Q46 5 42 14Q42 5 34 8Q18 14 9 30Q3 42 10 43Z" fill="#f5b52a" /></svg>
          </AppButton>
          <AppButton $state="open" aria-label="Acrobat Reader">
            <svg width="42" height="42"><defs><linearGradient id="acro" x2="0" y2="1"><stop stopColor="#ee0a0a" /><stop offset="1" stopColor="#8e0606" /></linearGradient></defs>
              <path d="M0 0H42V42H0Z" fill="url(#acro)" /><path d="M19 9Q24 9 20 20Q17 28 12 32Q8 35 8 32Q9 28 20 26Q32 23 34 27Q33 30 27 26Q20 21 18 12Q18 9 19 9Z" fill="none" stroke="#fff" strokeWidth="2" /></svg>
          </AppButton>
          <AppButton $state="open" aria-label="ペイント">
            <svg width="48" height="48"><path d="M26 8Q46 10 45 27T24 45Q10 46 12 36Q12 32 6 36Q0 36 2 28Q6 10 26 8Z" fill="#cfe4f2" stroke="#8db3cf" />
              <circle cx="9" cy="26" r="4" fill="#e2474a" /><path d="M12 17h8v6h-8Z" fill="#5fb648" /><circle cx="25" cy="15" r="4" fill="#f2ac1e" /><circle cx="20" cy="28" r="3" fill="#1e1e1e" />
              <path d="M22 46L30 24L36 12L39 14L34 26L25 46Z" fill="#e0823a" /><path d="M34 10L36 1L47 5L40 15Z" fill="#d9b48a" /></svg>
          </AppButton>
        </Apps>
        <Tray>
          <IconButton $w={64} aria-label="隠れているインジケーター"><Glyph c="#fff" d="M4 22L16 10L28 22" /></IconButton>
          <IconButton $w={64} aria-label="ディスプレイ"><Glyph c="#000" d="M14 22H2V3H31V14M1 27H14M32 22A8 8 0 1 1 16 22A8 8 0 1 1 32 22M25 17L22 22H26L23 27" /></IconButton>
          <IconButton $w={64} aria-label="OneDrive">
            <svg width="32" height="32"><circle cx="16" cy="14" r="10" fill="#888" /><circle cx="8" cy="18" r="8" fill="#ccc" /><path d="M1 24L14 16V27H6Q2 27 1 24Z" fill="#fff" />
              <circle cx="22" cy="22" r="10" fill="#d9252c" stroke="#1e1e1e" /><path d="M18 18L26 26M26 18L18 26" stroke="#fff" strokeWidth="2" /></svg>
          </IconButton>
          <IconButton $w={64} aria-label="Wi-Fi">
            <svg width="26" height="26" fill="none" stroke="#fff" strokeWidth="2"><path d="M1 25Q2 5 25 1M7 25Q8 11 25 7M13 25Q14 17 25 13" /><circle cx="22" cy="22" r="2" fill="#fff" /></svg>
          </IconButton>
          <IconButton $w={64} aria-label="電源">
            <svg width="34" height="32"><path d="M11 7H31V24H6V16" fill="none" stroke="#fff" strokeWidth="2" /><path d="M13 10H28V21H10V16ZM31 12h3v7h-3Z" fill="#fff" />
              <path d="M3 2V7M8 2V7M1 7H10V11L7 15H4L1 11Z" fill="none" stroke="#fff" strokeWidth="2" /></svg>
          </IconButton>
          <IconButton $w={74} aria-label="Windows Ink"><Glyph c="#fff" d="M11 31L13 21L24 2Q27 0 29 4L17 25ZM9 20Q1 20 1 26T8 31M25 13Q32 13 32 17T24 21" /></IconButton>
          <IconButton $w={56} aria-label="入力">
            <svg width="32" height="32"><circle cx="16" cy="16" r="15" fill="#8a8a8a" /><path d="M9 9L23 23M23 9L9 23" stroke="#1e1e1e" strokeWidth="3" /></svg>
          </IconButton>
          <Clock><span>10:41</span><span>2020/05/09</span></Clock>
          <IconButton $w={96} aria-label="通知">
            <svg width="32" height="32"><path d="M0 0H32V26H22L16 32L10 26H0Z" fill="#fff" /><path d="M6 7H26M6 13H26M6 19H18" stroke="#1e1e1e" strokeWidth="2" /></svg>
          </IconButton>
          <ShowDesktop aria-label="デスクトップの表示" />
        </Tray>
      </Taskbar>
    </Page>
  );
}
